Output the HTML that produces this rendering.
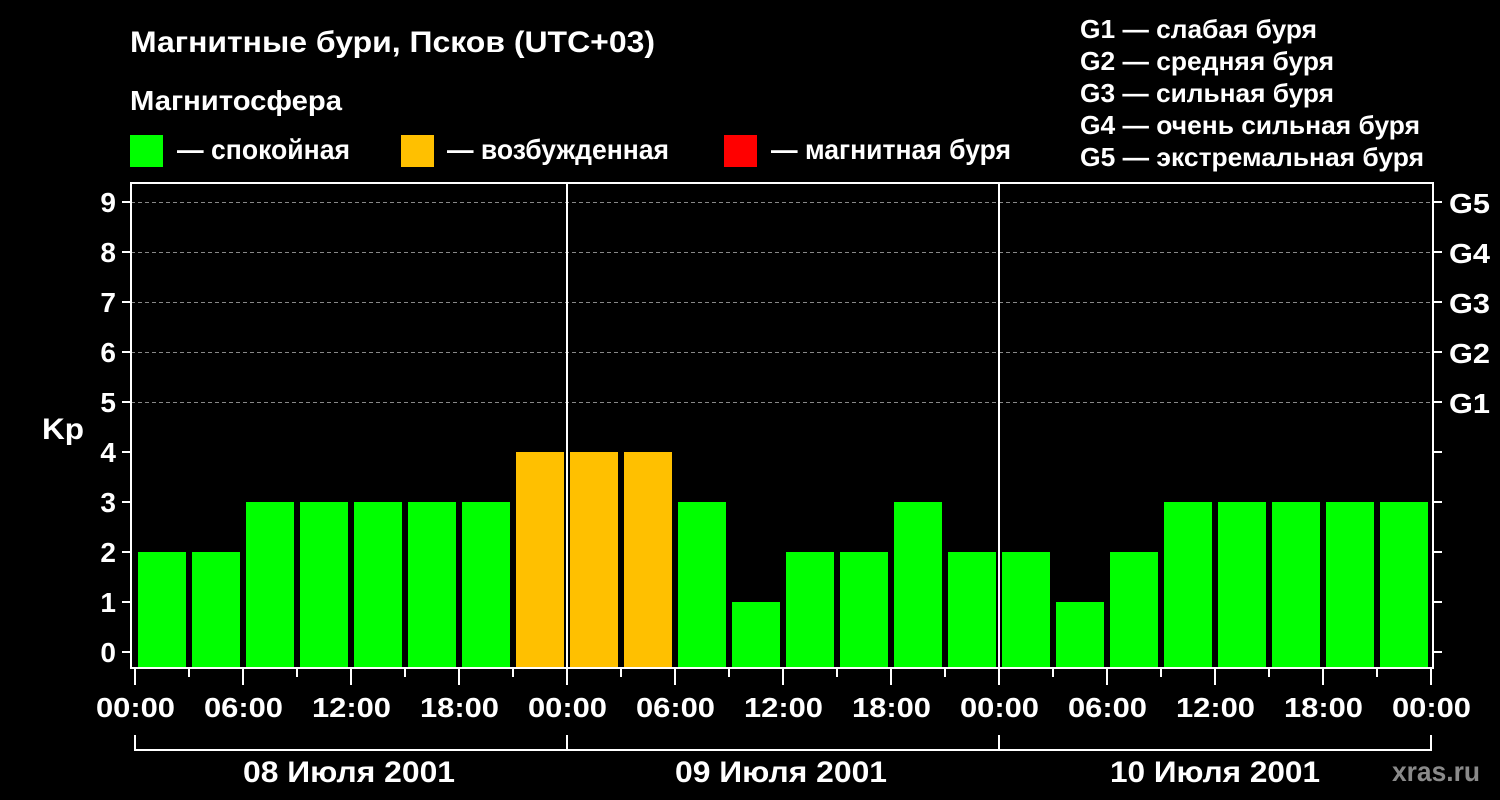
<!DOCTYPE html>
<html><head><meta charset="utf-8"><style>
html,body{margin:0;padding:0;background:#000;}
svg{display:block;}
text{font-family:"Liberation Sans",Arial,sans-serif;font-weight:bold;fill:#fff;}
</style></head><body>
<svg width="1500" height="800" viewBox="0 0 1500 800" xmlns="http://www.w3.org/2000/svg">
<rect width="1500" height="800" fill="#000"/>
<text x="130" y="52" font-size="30" textLength="525" lengthAdjust="spacingAndGlyphs">Магнитные бури, Псков (UTC+03)</text>
<text x="130" y="110" font-size="28" textLength="212" lengthAdjust="spacingAndGlyphs">Магнитосфера</text>
<rect x="130" y="135" width="33" height="32" fill="#00ff00"/>
<text x="177" y="159" font-size="28" textLength="173" lengthAdjust="spacingAndGlyphs">— спокойная</text>
<rect x="401" y="135" width="33" height="32" fill="#ffc000"/>
<text x="447" y="159" font-size="28" textLength="222" lengthAdjust="spacingAndGlyphs">— возбужденная</text>
<rect x="724" y="135" width="33" height="32" fill="#ff0000"/>
<text x="771" y="159" font-size="28" textLength="240" lengthAdjust="spacingAndGlyphs">— магнитная буря</text>
<g font-size="26">
<text x="1080" y="38" textLength="237" lengthAdjust="spacingAndGlyphs">G1 — слабая буря</text>
<text x="1080" y="70" textLength="254" lengthAdjust="spacingAndGlyphs">G2 — средняя буря</text>
<text x="1080" y="102" textLength="254" lengthAdjust="spacingAndGlyphs">G3 — сильная буря</text>
<text x="1080" y="134" textLength="340" lengthAdjust="spacingAndGlyphs">G4 — очень сильная буря</text>
<text x="1080" y="166" textLength="344" lengthAdjust="spacingAndGlyphs">G5 — экстремальная буря</text>
</g>
<g stroke="#888" stroke-dasharray="4,3" stroke-width="1">
<line x1="131" y1="202.5" x2="1433" y2="202.5"/>
<line x1="131" y1="252.5" x2="1433" y2="252.5"/>
<line x1="131" y1="302.5" x2="1433" y2="302.5"/>
<line x1="131" y1="352.5" x2="1433" y2="352.5"/>
<line x1="131" y1="402.5" x2="1433" y2="402.5"/>
</g>
<g fill="#00ff00">
<rect x="138" y="552" width="48" height="116"/>
<rect x="192" y="552" width="48" height="116"/>
<rect x="246" y="502" width="48" height="166"/>
<rect x="300" y="502" width="48" height="166"/>
<rect x="354" y="502" width="48" height="166"/>
<rect x="408" y="502" width="48" height="166"/>
<rect x="462" y="502" width="48" height="166"/>
<rect x="516" y="452" width="48" height="216" fill="#ffc000"/>
<rect x="570" y="452" width="48" height="216" fill="#ffc000"/>
<rect x="624" y="452" width="48" height="216" fill="#ffc000"/>
<rect x="678" y="502" width="48" height="166"/>
<rect x="732" y="602" width="48" height="66"/>
<rect x="786" y="552" width="48" height="116"/>
<rect x="840" y="552" width="48" height="116"/>
<rect x="894" y="502" width="48" height="166"/>
<rect x="948" y="552" width="48" height="116"/>
<rect x="1002" y="552" width="48" height="116"/>
<rect x="1056" y="602" width="48" height="66"/>
<rect x="1110" y="552" width="48" height="116"/>
<rect x="1164" y="502" width="48" height="166"/>
<rect x="1218" y="502" width="48" height="166"/>
<rect x="1272" y="502" width="48" height="166"/>
<rect x="1326" y="502" width="48" height="166"/>
<rect x="1380" y="502" width="48" height="166"/>
</g>
<g stroke="#fff" stroke-width="2" fill="none">
<rect x="131" y="183" width="1302" height="485"/>
<line x1="567" y1="183" x2="567" y2="668"/>
<line x1="999" y1="183" x2="999" y2="668"/>
<path d="M135 669v16M189 669v8M243 669v16M297 669v8M351 669v16M405 669v8M459 669v16M513 669v8M567 669v16M621 669v8M675 669v16M729 669v8M783 669v16M837 669v8M891 669v16M945 669v8M999 669v16M1053 669v8M1107 669v16M1161 669v8M1215 669v16M1269 669v8M1323 669v16M1377 669v8M1431 669v16"/>
<path d="M122 652h9M122 602h9M122 552h9M122 502h9M122 452h9M122 402h9M122 352h9M122 302h9M122 252h9M122 202h9M1433 652h9M1433 602h9M1433 552h9M1433 502h9M1433 452h9M1433 402h9M1433 352h9M1433 302h9M1433 252h9M1433 202h9"/>
<polyline points="135,735 135,750 1431,750 1431,735"/>
<line x1="567" y1="735" x2="567" y2="750"/>
<line x1="999" y1="735" x2="999" y2="750"/>
</g>
<g font-size="28" text-anchor="end">
<text x="116" y="662">0</text><text x="116" y="612">1</text><text x="116" y="562">2</text>
<text x="116" y="512">3</text><text x="116" y="462">4</text><text x="116" y="412">5</text>
<text x="116" y="362">6</text><text x="116" y="312">7</text><text x="116" y="262">8</text>
<text x="116" y="212">9</text>
</g>
<text x="42" y="439" font-size="30" textLength="42" lengthAdjust="spacingAndGlyphs">Kp</text>
<g font-size="28">
<text x="1449" y="213" textLength="41" lengthAdjust="spacingAndGlyphs">G5</text>
<text x="1449" y="263" textLength="41" lengthAdjust="spacingAndGlyphs">G4</text>
<text x="1449" y="313" textLength="41" lengthAdjust="spacingAndGlyphs">G3</text>
<text x="1449" y="363" textLength="41" lengthAdjust="spacingAndGlyphs">G2</text>
<text x="1449" y="413" textLength="41" lengthAdjust="spacingAndGlyphs">G1</text>
</g>
<g font-size="28">
<text x="96" y="717" textLength="79" lengthAdjust="spacingAndGlyphs">00:00</text>
<text x="204" y="717" textLength="79" lengthAdjust="spacingAndGlyphs">06:00</text>
<text x="312" y="717" textLength="79" lengthAdjust="spacingAndGlyphs">12:00</text>
<text x="420" y="717" textLength="79" lengthAdjust="spacingAndGlyphs">18:00</text>
<text x="528" y="717" textLength="79" lengthAdjust="spacingAndGlyphs">00:00</text>
<text x="636" y="717" textLength="79" lengthAdjust="spacingAndGlyphs">06:00</text>
<text x="744" y="717" textLength="79" lengthAdjust="spacingAndGlyphs">12:00</text>
<text x="852" y="717" textLength="79" lengthAdjust="spacingAndGlyphs">18:00</text>
<text x="960" y="717" textLength="79" lengthAdjust="spacingAndGlyphs">00:00</text>
<text x="1068" y="717" textLength="79" lengthAdjust="spacingAndGlyphs">06:00</text>
<text x="1176" y="717" textLength="79" lengthAdjust="spacingAndGlyphs">12:00</text>
<text x="1284" y="717" textLength="79" lengthAdjust="spacingAndGlyphs">18:00</text>
<text x="1392" y="717" textLength="79" lengthAdjust="spacingAndGlyphs">00:00</text>
</g>
<g font-size="30">
<text x="243" y="782" textLength="212" lengthAdjust="spacingAndGlyphs">08 Июля 2001</text>
<text x="675" y="782" textLength="212" lengthAdjust="spacingAndGlyphs">09 Июля 2001</text>
<text x="1110" y="782" textLength="210" lengthAdjust="spacingAndGlyphs">10 Июля 2001</text>
</g>
<text x="1392" y="781" font-size="28" style="fill:#8a8a8a" textLength="88" lengthAdjust="spacingAndGlyphs">xras.ru</text>
</svg>
</body></html>
